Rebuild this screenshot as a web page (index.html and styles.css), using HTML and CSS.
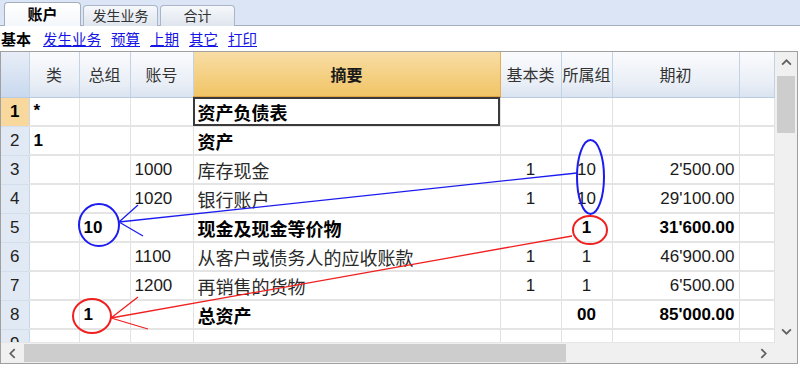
FILE: index.html
```html
<!DOCTYPE html>
<html>
<head>
    <meta charset="utf-8" />
    <title>账户</title>
    <link rel="stylesheet" href="styles.css">
</head>
<body>
    <div class="tabs">
        <div class="tab active">账户</div>
        <div class="tab">发生业务</div>
        <div class="tab">合计</div>
    </div>

    <div class="views">
        <b>基本</b>
        <a href="#">发生业务</a>
        <a href="#">预算</a>
        <a href="#">上期</a>
        <a href="#">其它</a>
        <a href="#">打印</a>
    </div>

    <div class="sheet">
        <div class="grid-wrap">
            <table class="grid">
                <colgroup>
                    <col style="width: 28px" />
                    <col style="width: 50px" />
                    <col style="width: 51px" />
                    <col style="width: 63px" />
                    <col style="width: 307px" />
                    <col style="width: 61px" />
                    <col style="width: 51px" />
                    <col style="width: 127px" />
                    <col />
                </colgroup>
                <thead>
                    <tr>
                        <th class="corner-head"></th>
                        <th>类</th>
                        <th>总组</th>
                        <th>账号</th>
                        <th class="current">摘要</th>
                        <th>基本类</th>
                        <th>所属组</th>
                        <th>期初</th>
                        <th></th>
                    </tr>
                </thead>
                <tbody>
                    <tr>
                        <td class="row-no selected">1</td>
                        <td class="bold">*</td>
                        <td></td>
                        <td></td>
                        <td class="desc bold cursor">资产负债表</td>
                        <td></td><td></td><td></td><td></td>
                    </tr>
                    <tr>
                        <td class="row-no">2</td>
                        <td class="bold">1</td>
                        <td></td>
                        <td></td>
                        <td class="desc bold">资产</td>
                        <td></td><td></td><td></td><td></td>
                    </tr>
                    <tr>
                        <td class="row-no">3</td>
                        <td></td>
                        <td></td>
                        <td>1000</td>
                        <td class="desc">库存现金</td>
                        <td class="mid">1</td>
                        <td class="mid">10</td>
                        <td class="num">2'500.00</td>
                        <td></td>
                    </tr>
                    <tr>
                        <td class="row-no">4</td>
                        <td></td>
                        <td></td>
                        <td>1020</td>
                        <td class="desc">银行账户</td>
                        <td class="mid">1</td>
                        <td class="mid">10</td>
                        <td class="num">29'100.00</td>
                        <td></td>
                    </tr>
                    <tr>
                        <td class="row-no">5</td>
                        <td></td>
                        <td class="bold">10</td>
                        <td></td>
                        <td class="desc bold">现金及现金等价物</td>
                        <td></td>
                        <td class="mid bold">1</td>
                        <td class="num bold">31'600.00</td>
                        <td></td>
                    </tr>
                    <tr>
                        <td class="row-no">6</td>
                        <td></td>
                        <td></td>
                        <td>1100</td>
                        <td class="desc">从客户或债务人的应收账款</td>
                        <td class="mid">1</td>
                        <td class="mid">1</td>
                        <td class="num">46'900.00</td>
                        <td></td>
                    </tr>
                    <tr>
                        <td class="row-no">7</td>
                        <td></td>
                        <td></td>
                        <td>1200</td>
                        <td class="desc">再销售的货物</td>
                        <td class="mid">1</td>
                        <td class="mid">1</td>
                        <td class="num">6'500.00</td>
                        <td></td>
                    </tr>
                    <tr>
                        <td class="row-no">8</td>
                        <td></td>
                        <td class="bold">1</td>
                        <td></td>
                        <td class="desc bold">总资产</td>
                        <td></td>
                        <td class="mid bold">00</td>
                        <td class="num bold">85'000.00</td>
                        <td></td>
                    </tr>
                    <tr>
                        <td class="row-no">9</td>
                        <td></td><td></td><td></td><td></td><td></td><td></td><td></td><td></td>
                    </tr>
                </tbody>
            </table>

            <!-- annotations drawn over the grid, in page coordinates -->
            <svg class="marks" viewBox="1 52 774 290">
                <g fill="none" stroke="#1c1cf0">
                    <ellipse cx="590.5" cy="177" rx="13.5" ry="37" stroke-width="2" />
                    <ellipse cx="99" cy="225" rx="20" ry="21" stroke-width="2" />
                    <path d="M577 173 L119 222 M119 222 L138 205 M119 222 L143 236" stroke-width="1.3" />
                </g>
                <g fill="none" stroke="#f02020">
                    <ellipse cx="590" cy="230" rx="17" ry="14" stroke-width="2" />
                    <ellipse cx="92" cy="316" rx="19" ry="17" stroke-width="2" />
                    <path d="M572 236 L111 318 M111 318 L138 297 M111 318 L148 329" stroke-width="1.3" />
                </g>
            </svg>
        </div>

        <div class="vscroll">
            <svg class="arrow" viewBox="0 0 10 6"><path d="M1 5 L5 1 L9 5" /></svg>
            <div class="track"><div class="thumb"></div></div>
            <svg class="arrow" viewBox="0 0 10 6"><path d="M1 1 L5 5 L9 1" /></svg>
        </div>

        <div class="hscroll">
            <svg class="arrow" viewBox="0 0 6 10"><path d="M5 1 L1 5 L5 9" /></svg>
            <div class="track"><div class="thumb"></div></div>
            <svg class="arrow" viewBox="0 0 6 10"><path d="M1 1 L5 5 L1 9" /></svg>
        </div>

        <div class="corner"></div>
    </div>
</body>
</html>
```

FILE: styles.css
```css
html, body {
    margin: 0;
    width: 800px;
    height: 368px;
    overflow: hidden;
    background: #ffffff;
    font-family: "Liberation Sans", "Noto Sans CJK SC", sans-serif;
    color: #1a1a1a;
}

/* tab bar */

.tabs {
    height: 25px;
    background: #dbe5f6;
    border-bottom: 1px solid #a3afbf;
    display: flex;
    align-items: flex-end;
    gap: 2px;
    padding-left: 4px;
}

.tab {
    width: 73px;
    height: 20px;
    margin-bottom: -1px;
    border: 1px solid #a9b6c8;
    border-bottom: none;
    border-radius: 4px 4px 0 0;
    background: linear-gradient(#f6f8fb, #dfe5ee);
    font-size: 14px;
    line-height: 20px;
    text-align: center;
    color: #333;
}

.tab.active {
    width: 75px;
    height: 23px;
    line-height: 23px;
    background: linear-gradient(#ffffff, #f4f7fb);
    border-color: #a3afbf;
    font-weight: bold;
    color: #000;
    font-size: 15px;
}

/* view links */

.views {
    height: 25px;
    display: flex;
    align-items: center;
    gap: 10px;
    padding-left: 1px;
    font-size: 14.5px;
}

.views b {
    color: #000;
    font-size: 15px;
    margin-right: 2px;
}

.views a {
    color: #1515e6;
    text-decoration: underline;
}

/* sheet */

.sheet {
    display: grid;
    grid-template-columns: 774px 22px;
    grid-template-rows: 290px 21px;
    border: 1px solid #a0a0a0;
    width: 796px;
}

.grid-wrap {
    position: relative;
    overflow: hidden;
}

.grid {
    table-layout: fixed;
    border-collapse: collapse;
    width: 774px;
    font-size: 17px;
}

.grid th {
    height: 44px;
    padding: 0;
    font-weight: normal;
    font-size: 16px;
    color: #333;
    background: linear-gradient(#fafbfd, #e9eef6 70%, #d9e3f0);
    border-right: 1px solid #c3d3e6;
    border-bottom: 1px solid #b8cbe0;
}

.grid th.corner-head {
    background: linear-gradient(#e8eef8, #c9d8ee);
}

.grid th.current {
    background: linear-gradient(#f8dda4, #f1c466);
    border-right-color: #e6ad54;
    border-bottom: 2px solid #e0a445;
    font-weight: bold;
    color: #1a1a1a;
}

.grid td {
    height: 27px;
    padding: 0 4px;
    white-space: nowrap;
    overflow: hidden;
    border-right: 1px solid #e2e2e2;
    border-bottom: 2px solid #e4e4e4;
}

.grid td.desc {
    font-size: 18px;
    color: #2a2a2a;
}

.grid td.row-no {
    padding: 0;
    text-align: center;
    background: #e1e9f5;
    border-right: 1px solid #c9d6e8;
    border-bottom: 1px solid #d3deec;
    color: #222;
}

.grid td.row-no.selected {
    background: #f9d89e;
    font-weight: bold;
    color: #000;
}

.grid td.cursor {
    outline: 2px solid #3a3a3a;
    outline-offset: -2px;
}

.grid td.bold {
    font-weight: bold;
    color: #000;
}

.mid {
    text-align: center;
}

.num {
    text-align: right;
}

.marks {
    position: absolute;
    left: 0;
    top: 0;
    width: 774px;
    height: 290px;
    pointer-events: none;
}

/* scrollbars */

.vscroll,
.hscroll,
.corner {
    background: #f0f0f0;
}

.vscroll {
    display: flex;
    flex-direction: column;
    align-items: center;
}

.hscroll {
    display: flex;
    align-items: center;
    border-top: 1px solid #e6e6e6;
}

.arrow {
    fill: none;
    stroke: #606060;
    stroke-width: 1.6;
}

.vscroll .arrow {
    width: 11px;
    height: 7px;
    margin: 7px 0;
}

.hscroll .arrow {
    width: 7px;
    height: 11px;
    margin: 0 8px;
}

.vscroll .track {
    flex: 1;
    width: 18px;
    margin-top: 3px;
}

.vscroll .thumb {
    height: 57px;
    background: #cdcdcd;
}

.hscroll .track {
    flex: 1;
    height: 18px;
}

.hscroll .thumb {
    width: 542px;
    height: 18px;
    background: #cdcdcd;
}
```
